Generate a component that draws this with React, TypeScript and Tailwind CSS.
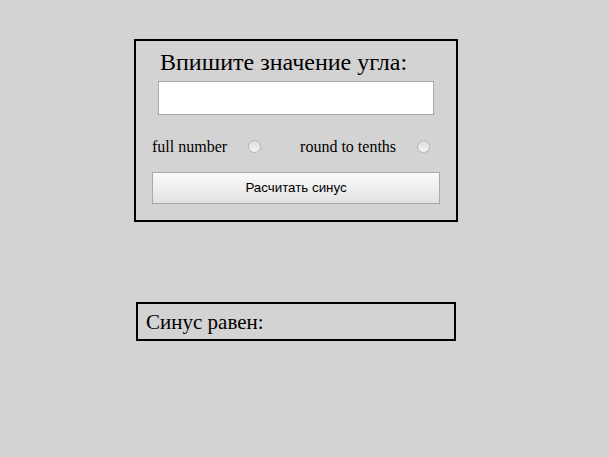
export default function App() {
  return (
    <div className="min-h-[457px] bg-[#d3d3d3] pt-[39px] text-black font-['Liberation_Serif',serif]">
      <div className="ml-[134px] w-[324px] border-2 border-black px-[16px] pt-[7px] pb-[16px]">
        <h1 className="ml-[8px] text-[24px] leading-[28px]">Впишите значение угла:</h1>
        <input
          type="text"
          className="ml-[6px] mt-[5px] block h-[34px] w-[276px] border border-[#a9a9a9] bg-white outline-none"
        />
        <div className="mt-[21px] flex h-[20px] items-center text-[16px] leading-[20px]">
          <span className="pt-[1px]">full number</span>
          <span className="ml-[21px] h-[13px] w-[13px] rounded-full border border-[#b5b5b5] bg-gradient-to-b from-[#dcdcdc] to-[#f5f5f5]" />
          <span className="ml-[39px] pt-[1px]">round to tenths</span>
          <span className="ml-[21px] h-[13px] w-[13px] rounded-full border border-[#b5b5b5] bg-gradient-to-b from-[#dcdcdc] to-[#f5f5f5]" />
        </div>
        <button className="mt-[16px] block h-[32px] w-[288px] border border-[#a9a9a9] bg-gradient-to-b from-[#fafafa] to-[#e2e2e2] font-['Liberation_Sans',sans-serif] text-[13.33px]">
          Расчитать синус
        </button>
      </div>
      <div className="ml-[136px] mt-[80px] flex h-[39px] w-[320px] items-center border-2 border-black pl-[8px]">
        <span className="text-[21px] leading-[24px]">Синус равен:</span>
      </div>
    </div>
  );
}
